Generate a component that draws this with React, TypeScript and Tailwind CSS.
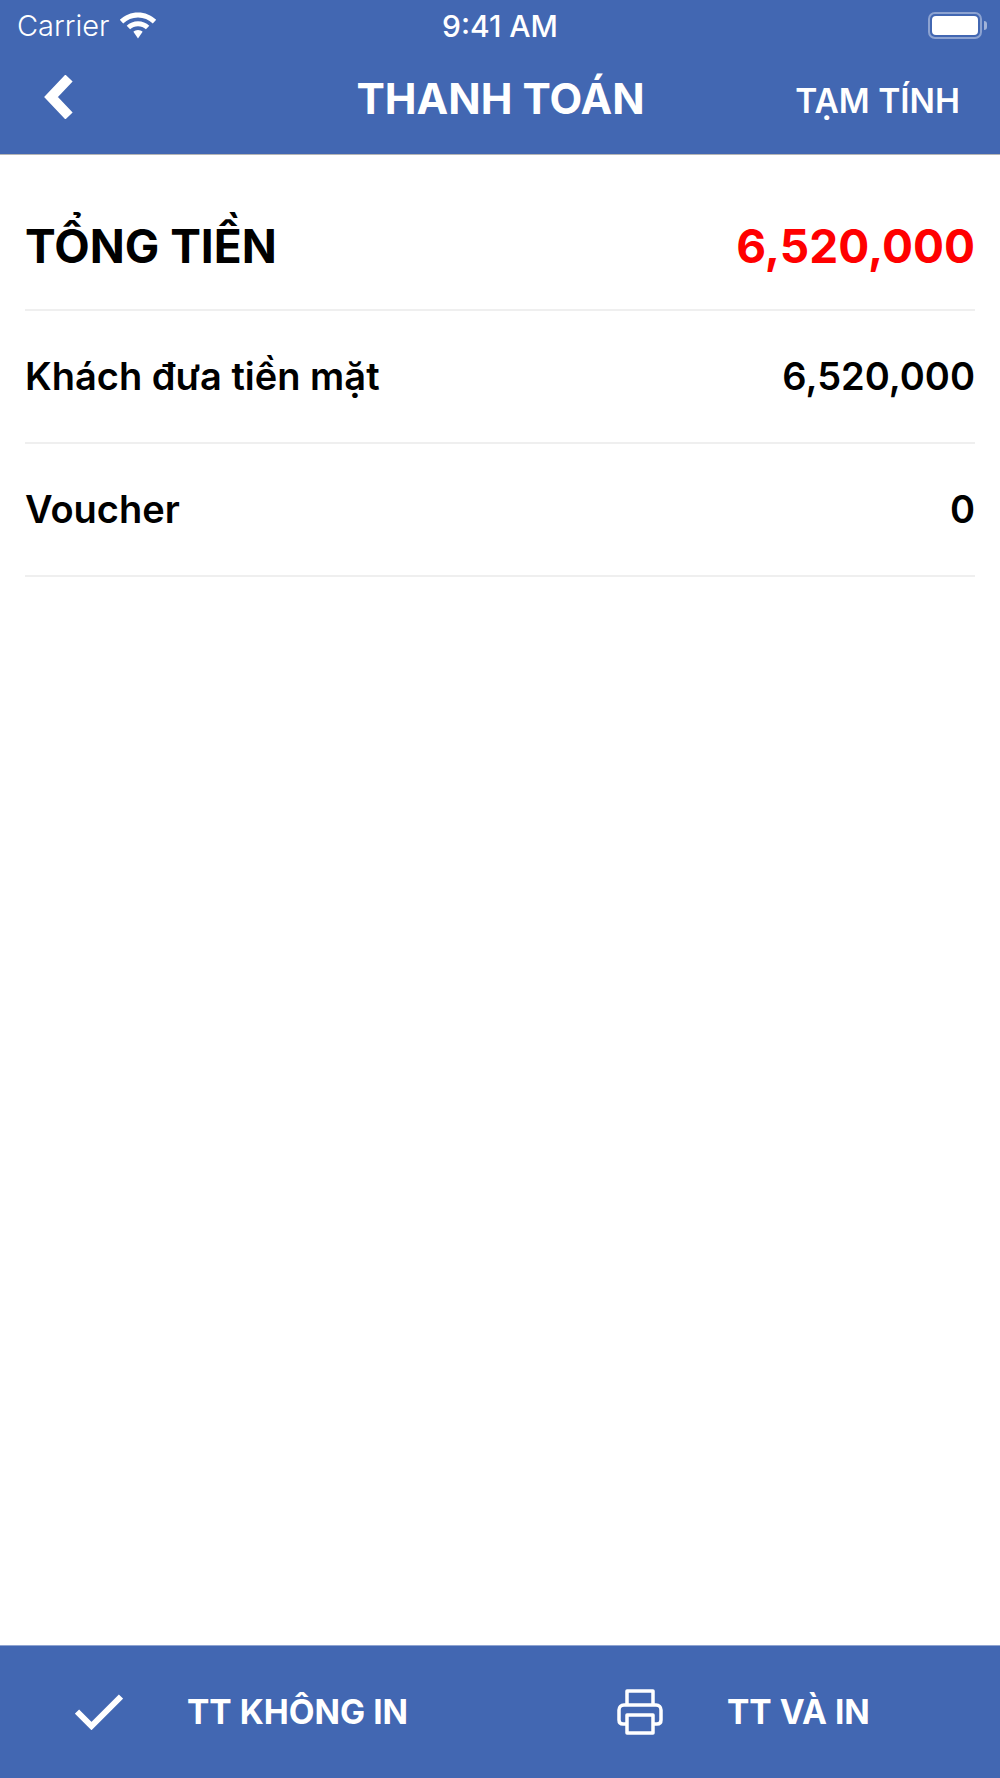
const rows = [
  { label: 'Khách đưa tiền mặt', value: '6,520,000' },
  { label: 'Voucher', value: '0' },
]

function WifiIcon() {
  return (
    <svg width="38" height="27" viewBox="0 0 38 27" fill="none" className="block">
      <path d="M19 0.5C12 0.5 5.8 3.2 0.8 7.8L4.2 11.4C8.2 7.8 13.3 5.6 19 5.6C24.7 5.6 29.8 7.8 33.8 11.4L37.2 7.8C32.2 3.2 26 0.5 19 0.5Z" fill="white" />
      <path d="M19 9.3C14.7 9.3 10.8 11 7.7 13.7L11.1 17.3C13.3 15.4 16 14.3 19 14.3C22 14.3 24.7 15.4 26.9 17.3L30.3 13.7C27.2 11 23.3 9.3 19 9.3Z" fill="white" />
      <path d="M19 18C17.2 18 15.6 18.7 14.4 19.8L19 26.5L23.6 19.8C22.4 18.7 20.8 18 19 18Z" fill="white" />
    </svg>
  )
}

function BatteryIcon() {
  return (
    <div className="flex items-center">
      <div className="w-[54px] h-[27px] rounded-[7px] border-2 border-white/40 p-[2px]">
        <div className="w-full h-full rounded-[4px] bg-white" />
      </div>
      <div className="w-[3px] h-[9px] bg-white/50 rounded-r-[3px] ml-[2px]" />
    </div>
  )
}

function PrinterIcon() {
  return (
    <svg width="46" height="46" viewBox="0 0 46 46" fill="none" stroke="white" strokeWidth="3.5" strokeLinejoin="round" className="block">
      <path d="M10 16V2H36V16" />
      <path d="M10 35H6C3.5 35 2 33.5 2 31V21C2 18 4 16 7 16H39C42 16 44 18 44 21V31C44 33.5 42.5 35 40 35H36" />
      <rect x="10" y="26" width="26" height="18" />
    </svg>
  )
}

export default function App() {
  return (
    <div className="w-[1000px] h-[1778px] flex flex-col bg-white text-black font-['Inter','Noto_Sans',sans-serif]">
      {/* Header */}
      <div className="h-[155px] shrink-0 bg-[#4267b2] border-b border-[#b5b5b5] text-white flex flex-col">
        <div className="h-[50px] flex items-center justify-between pl-[17px] pr-[13px] pt-[1px]">
          <div className="w-[296px] flex items-center gap-[10px]">
            <span className="text-[29px] font-light leading-none">Carrier</span>
            <WifiIcon />
          </div>
          <span className="text-[30px] font-medium leading-none">9:41 AM</span>
          <div className="w-[300px] flex justify-end">
            <BatteryIcon />
          </div>
        </div>
        <div className="flex-1 flex items-center justify-between pl-[44px] pr-[40px] pb-[5px]">
          <div className="w-[200px] flex">
            <svg width="30" height="44" viewBox="0 0 30 44" fill="none" className="block mb-[6px]">
              <path d="M25 3L7 22L25 41" stroke="white" strokeWidth="10" strokeLinejoin="miter" />
            </svg>
          </div>
          <span className="text-[42.5px] font-bold leading-none">THANH TOÁN</span>
          <span className="w-[203px] pt-[4px] text-right text-[33.5px] font-semibold leading-none">TẠM TÍNH</span>
        </div>
      </div>

      {/* Totals */}
      <div className="flex-1 px-[25px] pt-px">
        <div className="h-[155px] pt-[28px] flex items-center justify-between border-b-2 border-[#efefef] text-[46px] font-bold">
          <span>TỔNG TIỀN</span>
          <span className="text-[#ff0000]">6,520,000</span>
        </div>
        {rows.map((row) => (
          <div key={row.label} className="h-[133px] flex items-center justify-between border-b-2 border-[#efefef] text-[38px] font-[620]">
            <span>{row.label}</span>
            <span>{row.value}</span>
          </div>
        ))}
      </div>

      {/* Footer */}
      <div className="h-[133px] shrink-0 bg-[#4267b2] border-t border-[#8fa4d1] text-white flex items-center text-[33.5px] font-bold">
        <div className="w-[500px] flex items-center pl-[75px]">
          <svg width="48" height="36" viewBox="0 0 48 36" fill="none" className="block">
            <path d="M2 17.5L16.5 32L46 2.5" stroke="white" strokeWidth="6" />
          </svg>
          <span className="ml-[64px]">TT KHÔNG IN</span>
        </div>
        <div className="w-[500px] flex items-center pl-[117px]">
          <PrinterIcon />
          <span className="ml-[64px]">TT VÀ IN</span>
        </div>
      </div>
    </div>
  )
}
